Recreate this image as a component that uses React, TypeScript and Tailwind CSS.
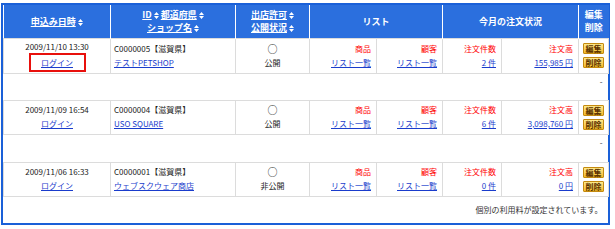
import React from "react";

const font = { fontFamily: '"Noto Sans CJK JP", "Liberation Sans", sans-serif' };

const Sort = () => (
  <svg width="5" height="7" viewBox="0 0 5 7" className="inline-block ml-[2px] align-[-1px]">
    <path d="M2.5 0L5 3H0z M0 4h5L2.5 7z" fill="white" />
  </svg>
);

const shops = [
  { date: "2009/11/10 13:30", id: "C0000005", pref: "滋賀県", name: "テストPETSHOP", open: "公開", count: "2 件", total: "155,985 円", marked: true },
  { date: "2009/11/09 16:54", id: "C0000004", pref: "滋賀県", name: "USO SQUARE", open: "公開", count: "6 件", total: "3,098,760 円" },
  { date: "2009/11/06 16:33", id: "C0000001", pref: "滋賀県", name: "ウェブスクウェア商店", open: "非公開", count: "0 件", total: "0 円" },
];

function Btn({ label }: { label: string }) {
  return (
    <span className="block w-[21px] h-[11px] mx-auto border border-[#c48a10] rounded-[1px] bg-linear-to-b from-[#ffe98a] to-[#f3bb22] text-center text-[8px] leading-[9px] font-bold text-[#5a3200]">
      {label}
    </span>
  );
}

export default function App() {
  const td = "border border-[#dcdcdc] align-middle text-[8px] leading-[14px]";
  const link = "text-[#1a3ccc] underline";
  const th = "bg-[#2b6fde] border-l border-white text-white font-bold text-[9px] leading-[13px] text-center align-middle";
  return (
    <div style={font} className="ml-[1px] mt-[3px] w-[609px] h-[222px] border-2 border-[#1a60d8] bg-white text-[#222]">
      <table className="w-[605px] table-fixed border-collapse">
        <colgroup>
          <col className="w-[107px]" />
          <col className="w-[125px]" />
          <col className="w-[74px]" />
          <col className="w-[67px]" />
          <col className="w-[66px]" />
          <col className="w-[59px]" />
          <col className="w-[77px]" />
          <col className="w-[30px]" />
        </colgroup>
        <thead>
          <tr className="h-[33px]">
            <th className={th + " border-l-0"}>
              <span className="underline">申込み日時</span><Sort />
            </th>
            <th className={th}>
              <div><span className="underline">ID</span><Sort /> <span className="underline">都道府県</span><Sort /></div>
              <div><span className="underline">ショップ名</span><Sort /></div>
            </th>
            <th className={th}>
              <div><span className="underline">出店許可</span><Sort /></div>
              <div><span className="underline">公開状況</span><Sort /></div>
            </th>
            <th colSpan={2} className={th}>リスト</th>
            <th colSpan={2} className={th}>今月の注文状況</th>
            <th className={th}>
              <div>編集</div>
              <div>削除</div>
            </th>
          </tr>
        </thead>
        <tbody>
          {shops.map((s, i) => (
            <React.Fragment key={s.id}>
              <tr className={i === 0 ? "h-[35px]" : "h-[34px]"}>
                <td className={td + " text-center"}>
                  <div>{s.date}</div>
                  {s.marked ? (
                    <span className="inline-block w-[57px] h-[19px] border-2 border-[#e8100c] leading-[15px] -mt-[1px]">
                      <a className={link}>ログイン</a>
                    </span>
                  ) : (
                    <a className={link}>ログイン</a>
                  )}
                </td>
                <td className={td + " pl-[3px]"}>
                  <div>{s.id}【{s.pref}】</div>
                  <a className={link}>{s.name}</a>
                </td>
                <td className={td + " text-center"}>
                  <div className="text-[10px] leading-[14px]">○</div>
                  <div>{s.open}</div>
                </td>
                <td className={td + " text-right pr-[5px]"}>
                  <div className="text-[#ff0000]">商品</div>
                  <a className={link}>リスト一覧</a>
                </td>
                <td className={td + " text-right pr-[5px]"}>
                  <div className="text-[#ff0000]">顧客</div>
                  <a className={link}>リスト一覧</a>
                </td>
                <td className={td + " text-right pr-[5px]"}>
                  <div className="text-[#ff0000]">注文件数</div>
                  <a className={link}>{s.count}</a>
                </td>
                <td className={td + " text-right pr-[5px]"}>
                  <div className="text-[#ff0000]">注文高</div>
                  <a className={link}>{s.total}</a>
                </td>
                <td className={td}>
                  <div className="flex flex-col gap-[3px]">
                    <Btn label="編集" />
                    <Btn label="削除" />
                  </div>
                </td>
              </tr>
              {i < shops.length - 1 ? (
                <tr className={i === 0 ? "h-[27px]" : "h-[28px]"}>
                  <td colSpan={8} className="align-top text-right pr-[6px] pt-[2px] text-[8px] leading-[12px] text-[#333]">-</td>
                </tr>
              ) : (
                <tr className="h-[27px]">
                  <td colSpan={8} className="align-middle text-right pr-[6px] text-[8px] leading-[12px] text-[#333]">
                    個別の利用料が設定されています。
                  </td>
                </tr>
              )}
            </React.Fragment>
          ))}
        </tbody>
      </table>
    </div>
  );
}
